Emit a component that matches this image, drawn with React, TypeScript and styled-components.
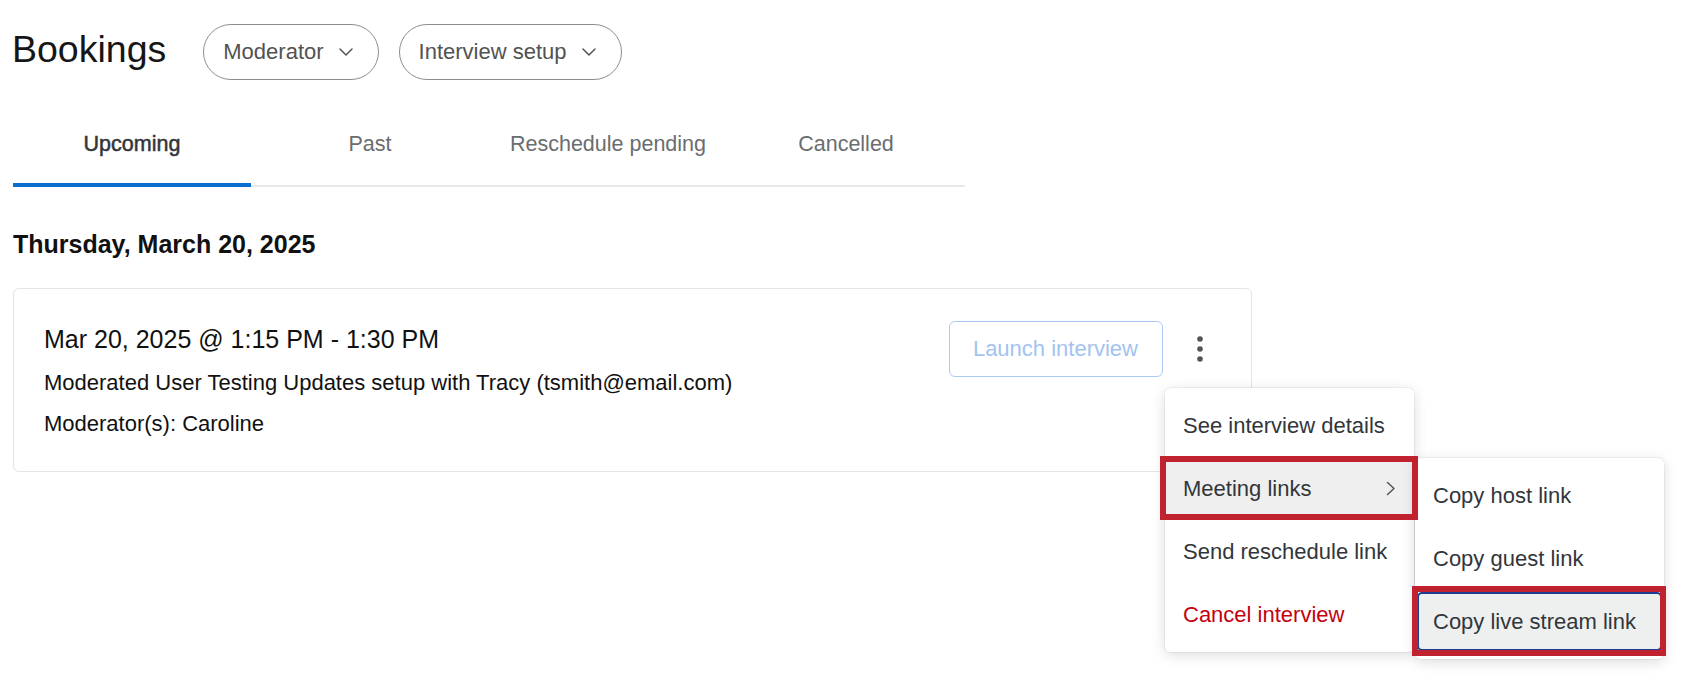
import styled, { createGlobalStyle } from 'styled-components';

const GlobalStyle = createGlobalStyle`
  html, body, #root {
    min-height: 100%;
  }
  body {
    margin: 0;
    background: #ffffff;
    font-family: "Liberation Sans", Arial, sans-serif;
  }
  * { box-sizing: border-box; }
`;

const Page = styled.div`
  min-height: 100vh;
  padding: 24px 13px 0;
`;

const Header = styled.div`
  display: flex;
  align-items: center;
  height: 56px;
`;

const Title = styled.h1`
  margin: -4px 37px 0 -1px;
  font-size: 37.5px;
  font-weight: 400;
  line-height: 1;
  color: #161616;
`;

const Pill = styled.button`
  display: inline-flex;
  align-items: center;
  gap: 15px;
  height: 56px;
  margin-right: 20px;
  padding: 0 25px 0 19px;
  border: 1.5px solid #8d8d8d;
  border-radius: 28px;
  background: #fff;
  font-family: inherit;
  font-size: 22px;
  color: #525252;
  cursor: pointer;
`;

const Tabs = styled.div`
  display: grid;
  grid-template-columns: repeat(4, 238px);
  width: fit-content;
  margin-top: 24px;
  border-bottom: 2px solid #e8e8e8;
`;

const Tab = styled.div<{ $active?: boolean }>`
  position: relative;
  padding: 27px 0 28px;
  text-align: center;
  font-size: 21.5px;
  line-height: 26px;
  color: ${(p) => (p.$active ? '#32363a' : '#6a6d70')};
  -webkit-text-stroke: ${(p) => (p.$active ? '0.5px #32363a' : '0')};

  &::after {
    content: '';
    display: ${(p) => (p.$active ? 'block' : 'none')};
    position: absolute;
    left: 0;
    right: 0;
    bottom: -2px;
    height: 4px;
    background: #0a6ed1;
  }
`;

const DateHeading = styled.h2`
  margin: 42px 0 29px;
  font-size: 25px;
  font-weight: 700;
  line-height: 30px;
  color: #111;
`;

const Card = styled.div`
  display: flex;
  justify-content: space-between;
  align-items: flex-start;
  width: 1239px;
  padding: 30px 31px 27px 30px;
  border: 1px solid #e3e4e6;
  border-radius: 6px;
  background: #fff;
`;

const Info = styled.div`
  display: flex;
  flex-direction: column;
`;

const TimeRange = styled.div`
  font-size: 25px;
  line-height: 41px;
  color: #111;
`;

const Detail = styled.div<{ $gap?: number }>`
  margin-top: ${(p) => p.$gap ?? 0}px;
  font-size: 22px;
  line-height: 41px;
  color: #111;
`;

const Actions = styled.div`
  display: flex;
  align-items: center;
  gap: 17px;
  margin-top: 2px;
`;

const LaunchButton = styled.button`
  height: 56px;
  padding: 0 24px 0 23px;
  border: 1.5px solid #abc9f2;
  border-radius: 6px;
  background: #fff;
  font-family: inherit;
  font-size: 22px;
  color: #a2c3f1;
`;

const KebabWrap = styled.div`
  position: relative;
`;

const KebabButton = styled.button`
  display: flex;
  align-items: center;
  justify-content: center;
  width: 40px;
  height: 56px;
  padding: 0;
  border: none;
  background: none;
  cursor: pointer;
`;

const Menu = styled.div`
  position: absolute;
  top: calc(100% + 11px);
  left: -15px;
  width: 249px;
  padding: 6px 0;
  border-radius: 6px;
  background: #fff;
  box-shadow: 0 0 0 1px rgba(0, 0, 0, 0.04), 0 3px 14px rgba(0, 0, 0, 0.14);
  z-index: 10;
`;

const SubMenu = styled(Menu)`
  top: 1px;
  left: calc(100% + 1px);
`;

const MenuItem = styled.div<{ $danger?: boolean; $hover?: boolean; $focus?: boolean }>`
  position: relative;
  display: flex;
  align-items: center;
  justify-content: space-between;
  height: 63px;
  padding: 0 18px;
  font-size: 22px;
  white-space: nowrap;
  color: ${(p) => (p.$danger ? '#c4000f' : '#32363a')};
  background: ${(p) => (p.$hover ? '#efefef' : 'transparent')};
  cursor: pointer;

  &::before {
    content: '';
    display: ${(p) => (p.$focus ? 'block' : 'none')};
    position: absolute;
    inset: 2px;
    border: 2px solid #1c3f95;
    border-radius: 5px;
    background: #eef0f0;
  }
`;

const ItemLabel = styled.span`
  position: relative;
`;

const Callout = styled.span<{ $inset: string }>`
  position: absolute;
  inset: ${(p) => p.$inset};
  border: 6px solid #c1222f;
  pointer-events: none;
  z-index: 20;
`;

const ChevronDown = () => (
  <svg width="14" height="8" viewBox="0 0 14 8" fill="none">
    <polyline points="1,1 7,7 13,1" stroke="#555" strokeWidth="1.5" strokeLinecap="round" strokeLinejoin="round" />
  </svg>
);

const ChevronRight = () => (
  <svg width="10" height="15" viewBox="0 0 10 15" fill="none">
    <polyline points="1.5,1.5 8,7.5 1.5,13.5" stroke="#555" strokeWidth="1.5" strokeLinecap="round" strokeLinejoin="round" />
  </svg>
);

const KebabIcon = () => (
  <svg width="8" height="28" viewBox="0 0 8 28">
    <circle cx="4" cy="4" r="2.8" fill="#555" />
    <circle cx="4" cy="14" r="2.8" fill="#555" />
    <circle cx="4" cy="24" r="2.8" fill="#555" />
  </svg>
);

const tabs = ['Upcoming', 'Past', 'Reschedule pending', 'Cancelled'];

export default function App() {
  return (
    <Page>
      <GlobalStyle />
      <Header>
        <Title>Bookings</Title>
        <Pill>
          Moderator
          <ChevronDown />
        </Pill>
        <Pill>
          Interview setup
          <ChevronDown />
        </Pill>
      </Header>

      <Tabs>
        {tabs.map((t, i) => (
          <Tab key={t} $active={i === 0}>
            {t}
          </Tab>
        ))}
      </Tabs>

      <DateHeading>Thursday, March 20, 2025</DateHeading>

      <Card>
        <Info>
          <TimeRange>Mar 20, 2025 @ 1:15 PM - 1:30 PM</TimeRange>
          <Detail $gap={2}>Moderated User Testing Updates setup with Tracy (tsmith@email.com)</Detail>
          <Detail>Moderator(s): Caroline</Detail>
        </Info>
        <Actions>
          <LaunchButton disabled>Launch interview</LaunchButton>
          <KebabWrap>
            <KebabButton aria-label="More actions">
              <KebabIcon />
            </KebabButton>
            <Menu>
              <MenuItem>See interview details</MenuItem>
              <MenuItem $hover>
                <ItemLabel>Meeting links</ItemLabel>
                <ChevronRight />
                <SubMenu>
                  <MenuItem>Copy host link</MenuItem>
                  <MenuItem>Copy guest link</MenuItem>
                  <MenuItem $focus>
                    <ItemLabel>Copy live stream link</ItemLabel>
                    <Callout $inset="-4px -2px -3px -3px" />
                  </MenuItem>
                </SubMenu>
                <Callout $inset="-1px -4px 0 -5px" />
              </MenuItem>
              <MenuItem>Send reschedule link</MenuItem>
              <MenuItem $danger>Cancel interview</MenuItem>
            </Menu>
          </KebabWrap>
        </Actions>
      </Card>
    </Page>
  );
}
